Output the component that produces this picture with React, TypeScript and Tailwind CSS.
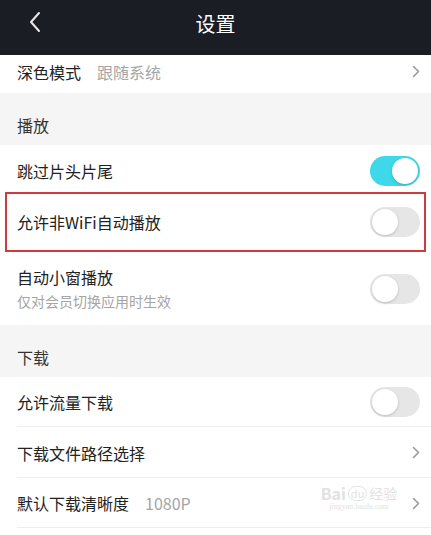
import React from "react";

const font = { fontFamily: '"Noto Sans CJK SC", "Noto Sans", sans-serif' };

function Toggle({ on }: { on?: boolean }) {
  return (
    <div
      className={`relative h-[30px] w-[50px] shrink-0 rounded-full ${on ? "bg-[#3ed8ea]" : "bg-[#e6e6e6]"}`}
    >
      <div
        className={`absolute top-[2px] h-[26px] w-[26px] rounded-full bg-white shadow-[0_1px_3px_rgba(0,0,0,0.18)] ${on ? "right-[2px]" : "left-[2px]"}`}
      />
    </div>
  );
}

function Chevron() {
  return (
    <svg width="8" height="13" viewBox="0 0 8 13" className="shrink-0">
      <path d="M1.5 1.5 L6.5 6.5 L1.5 11.5" fill="none" stroke="#9a9a9a" strokeWidth="1.6" strokeLinecap="round" strokeLinejoin="round" />
    </svg>
  );
}

function Row({
  h,
  children,
  right,
  sep,
}: {
  h: string;
  children: React.ReactNode;
  right: React.ReactNode;
  sep?: boolean;
}) {
  return (
    <div className={`relative flex items-center justify-between bg-white pl-[17px] pr-[11px] ${h}`}>
      <div className="flex flex-col">{children}</div>
      {right}
      {sep && <div className="absolute bottom-0 left-[17px] right-0 h-px bg-[#efefef]" />}
    </div>
  );
}

export default function App() {
  return (
    <div className="relative h-[535px] w-[431px] overflow-hidden bg-[#f5f5f5]" style={font}>
      {/* Header */}
      <div className="relative flex h-[55px] items-center justify-center bg-[#1b1d25] pb-[8px]">
        <svg width="14" height="22" viewBox="0 0 14 22" className="absolute left-[28px] top-[11px]">
          <path d="M11 2 L3 11 L11 20" fill="none" stroke="#e8e8e8" strokeWidth="2" strokeLinecap="round" strokeLinejoin="round" />
        </svg>
        <span className="text-[20px] text-white">设置</span>
      </div>

      {/* Dark mode row */}
      <div className="flex h-[38px] items-center justify-between bg-white pb-[5px] pl-[17px] pr-[11px]">
        <div className="flex items-center gap-[16px] text-[16px]">
          <span className="text-[#222]">深色模式</span>
          <span className="text-[#a5a5a5]">跟随系统</span>
        </div>
        <Chevron />
      </div>

      {/* Section 播放 */}
      <div className="flex h-[52px] items-end bg-[#f5f5f5] pb-[8px] pl-[17px] text-[16px] text-[#333]">播放</div>

      <Row h="h-[52px]" right={<Toggle on />}>
        <span className="text-[16px] text-[#222]">跳过片头片尾</span>
      </Row>
      <Row h="h-[50px]" right={<Toggle />}>
        <span className="text-[16px] text-[#222]">允许非WiFi自动播放</span>
      </Row>
      <Row h="h-[78px] pt-[6px]" right={<Toggle />}>
        <span className="text-[16px] leading-[24px] text-[#222]">自动小窗播放</span>
        <span className="text-[14px] leading-[24px] text-[#a5a5a5]">仅对会员切换应用时生效</span>
      </Row>

      {/* Section 下载 */}
      <div className="flex h-[52px] items-end bg-[#f5f5f5] pb-[8px] pl-[17px] text-[16px] text-[#333]">下载</div>

      <Row h="h-[50px]" right={<Toggle />} sep>
        <span className="text-[16px] text-[#222]">允许流量下载</span>
      </Row>
      <Row h="h-[51px]" right={<Chevron />} sep>
        <span className="text-[16px] text-[#222]">下载文件路径选择</span>
      </Row>
      <Row h="h-[50px]" right={<Chevron />} sep>
        <div className="flex items-center gap-[16px] text-[16px]">
          <span className="text-[#222]">默认下载清晰度</span>
          <span className="text-[#a5a5a5]">1080P</span>
        </div>
      </Row>
      <div className="h-[7px] bg-white" />

      {/* Red annotation box */}
      <div className="pointer-events-none absolute left-[5px] top-[192px] h-[60px] w-[421px] border-2 border-[#cf3a40]" />

      {/* Watermark */}
      <div className="pointer-events-none absolute left-[313px] top-[484px] flex w-[92px] flex-col items-center text-[#e2e2e2]">
        <div className="flex items-center gap-[2px] text-[16px] leading-[18px]">
          <span className="font-bold">Bai</span>
          <span className="rounded-full border border-[#e2e2e2] px-[2px] text-[11px] leading-[13px]">du</span>
          <span className="text-[14px]">经验</span>
        </div>
        <span className="text-[8px] leading-[10px]" style={{ fontFamily: '"Liberation Serif", serif' }}>jingyan.baidu.com</span>
      </div>
    </div>
  );
}
